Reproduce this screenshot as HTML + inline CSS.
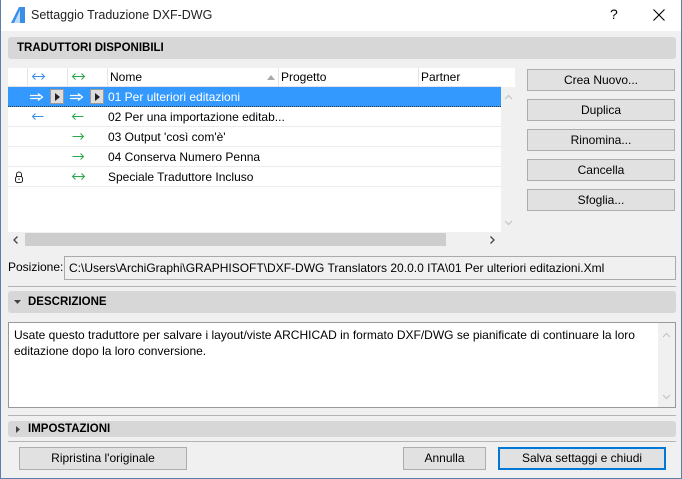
<!DOCTYPE html>
<html><head><meta charset="utf-8"><style>
*{box-sizing:border-box;margin:0;padding:0}
body{width:682px;height:479px;overflow:hidden;font-family:"Liberation Sans",sans-serif;font-size:12px;color:#000;background:#f0f0f0;position:relative}
.win{position:absolute;left:0;top:0;width:682px;height:479px;border:1px solid #5b7fa8;border-top:none;background:#f0f0f0}
.title{position:absolute;left:0;top:0;width:680px;height:31px;background:#fff}
.abs{position:absolute}
.sec{position:absolute;background:#d7d7d7;border-radius:3px;font-weight:bold;font-size:11.5px;line-height:22px}
.btn{position:absolute;background:#e1e1e1;border:1px solid #adadad;text-align:center;line-height:20px}
.row{position:absolute;left:7px;width:493px;height:20px;line-height:20px;border-bottom:1px solid #ececec;background:#fff}
.hr{position:absolute;height:1px;background:#b4b4b4}
svg.a{position:absolute;top:6px}
</style></head><body><div class="win">
<div class="title">
<svg class="abs" style="left:9px;top:6px" width="16" height="18"><path d="M1 17 L9 1 L15 1 L15 17 Z" fill="#3a8ee6"/><path d="M4 17 L10 4 L10 17Z" fill="#bcdcff"/></svg>
<div class="abs" style="left:30px;top:8px;font-size:12.5px;color:#222">Settaggio Traduzione DXF-DWG</div>
<div class="abs" style="left:609px;top:6px;font-size:14px">?</div>
<svg class="abs" style="left:652px;top:9px" width="12" height="12"><path d="M0.5 0.5L11.5 11.5M11.5 0.5L0.5 11.5" stroke="#000" stroke-width="1.1"/></svg>
</div>
<div class="sec" style="left:7px;top:37px;width:668px;height:22px;padding-left:9px">TRADUTTORI DISPONIBILI</div>
<div class="abs" style="left:7px;top:68px;width:507px;height:164px;background:#fff"></div>
<div class="abs" style="left:500px;top:87px;width:14px;height:145px;background:#f0f0f0"></div>
<svg class="abs" style="left:503px;top:94px" width="9" height="6"><path d="M1 5L4.5 1.5L8 5" stroke="#c0c0c0" fill="none"/></svg>
<svg class="abs" style="left:503px;top:220px" width="9" height="6"><path d="M1 1L4.5 4.5L8 1" stroke="#c0c0c0" fill="none"/></svg>
<div class="abs" style="left:7px;top:68px;width:493px;height:19px;border-bottom:1px solid #e5e5e5;line-height:19px">
<div class="abs" style="left:19px;top:0;width:1px;height:19px;background:#e5e5e5"></div>
<div class="abs" style="left:59px;top:0;width:1px;height:19px;background:#e5e5e5"></div>
<div class="abs" style="left:99px;top:0;width:1px;height:19px;background:#e5e5e5"></div>
<div class="abs" style="left:270px;top:0;width:1px;height:19px;background:#e5e5e5"></div>
<div class="abs" style="left:410px;top:0;width:1px;height:19px;background:#e5e5e5"></div>
<svg class="a" style="left:24px;top:5px" width="13" height="7"><path d="M0.5 3.5H12.5M3.5 0.5L0.5 3.5L3.5 6.5M9.5 0.5L12.5 3.5L9.5 6.5" stroke="#3a8ee6" fill="none"/></svg>
<svg class="a" style="left:64px;top:5px" width="13" height="7"><path d="M0.5 3.5H12.5M3.5 0.5L0.5 3.5L3.5 6.5M9.5 0.5L12.5 3.5L9.5 6.5" stroke="#2aa84a" fill="none"/></svg>
<span class="abs" style="left:102px">Nome</span>
<svg class="abs" style="left:259px;top:7px" width="8" height="5"><path d="M0 5L4 0L8 5Z" fill="#aaa"/></svg>
<span class="abs" style="left:273px">Progetto</span><span class="abs" style="left:413px">Partner</span></div>
<div class="row" style="top:87px;background:#3399ff;color:#fff;border-bottom:1px dotted #333">
<svg class="a" style="left:22px" width="14" height="8"><path d="M0 2.5H10M0 5.5H10M8 0.5L12.5 4L8 7.5" stroke="#fff" fill="none" stroke-width="1.2"/></svg>
<span class="abs" style="left:42px;top:2px;width:14px;height:15px;background:#ddd;border:1px solid #999"><svg class="abs" style="left:4px;top:3px" width="5" height="8"><path d="M0 0L5 4L0 8Z" fill="#222"/></svg></span>
<svg class="a" style="left:62px" width="14" height="8"><path d="M0 2.5H10M0 5.5H10M8 0.5L12.5 4L8 7.5" stroke="#fff" fill="none" stroke-width="1.2"/></svg>
<span class="abs" style="left:82px;top:2px;width:14px;height:15px;background:#ddd;border:1px solid #999"><svg class="abs" style="left:4px;top:3px" width="5" height="8"><path d="M0 0L5 4L0 8Z" fill="#222"/></svg></span>
<span class="abs" style="left:100px">01 Per ulteriori editazioni</span></div>
<div class="row" style="top:107px">
<svg class="a" style="left:24px" width="12" height="7"><path d="M0.5 3.5H11.5M3.5 0.5L0.5 3.5L3.5 6.5" stroke="#3a8ee6" fill="none"/></svg>
<svg class="a" style="left:64px" width="12" height="7"><path d="M0.5 3.5H11.5M3.5 0.5L0.5 3.5L3.5 6.5" stroke="#2aa84a" fill="none"/></svg>
<span class="abs" style="left:100px">02 Per una importazione editab...</span></div>
<div class="row" style="top:127px">
<svg class="a" style="left:64px" width="12" height="7"><path d="M0.5 3.5H11.5M8.5 0.5L11.5 3.5L8.5 6.5" stroke="#2aa84a" fill="none"/></svg>
<span class="abs" style="left:100px">03 Output 'così com'è'</span></div>
<div class="row" style="top:147px">
<svg class="a" style="left:64px" width="12" height="7"><path d="M0.5 3.5H11.5M8.5 0.5L11.5 3.5L8.5 6.5" stroke="#2aa84a" fill="none"/></svg>
<span class="abs" style="left:100px">04 Conserva Numero Penna</span></div>
<div class="row" style="top:167px">
<svg class="abs" style="left:6px;top:4px" width="10" height="12"><path d="M2.5 5.5V3.5A2.5 2.5 0 0 1 7.5 3.5V5.5" stroke="#222" fill="none"/><rect x="1.5" y="5.5" width="7" height="6" rx="2" stroke="#222" fill="#fff"/><path d="M5 7.5V9" stroke="#222"/></svg>
<svg class="a" style="left:64px" width="13" height="7"><path d="M0.5 3.5H12.5M3.5 0.5L0.5 3.5L3.5 6.5M9.5 0.5L12.5 3.5L9.5 6.5" stroke="#2aa84a" fill="none"/></svg>
<span class="abs" style="left:100px">Speciale Traduttore Incluso</span></div>
<div class="abs" style="left:7px;top:232px;width:507px;height:15px;background:#f0f0f0"></div>
<div class="abs" style="left:24px;top:233px;width:421px;height:13px;background:#cdcdcd"></div>
<svg class="abs" style="left:12px;top:236px" width="5" height="8"><path d="M4.5 0.5L1 4L4.5 7.5" stroke="#444" fill="none" stroke-width="1.3"/></svg>
<svg class="abs" style="left:489px;top:236px" width="5" height="8"><path d="M0.5 0.5L4 4L0.5 7.5" stroke="#444" fill="none" stroke-width="1.3"/></svg>
<div class="btn" style="left:526px;top:69px;width:148px;height:22px">Crea Nuovo...</div>
<div class="btn" style="left:526px;top:99px;width:148px;height:22px">Duplica</div>
<div class="btn" style="left:526px;top:129px;width:148px;height:22px">Rinomina...</div>
<div class="btn" style="left:526px;top:159px;width:148px;height:22px">Cancella</div>
<div class="btn" style="left:526px;top:189px;width:148px;height:22px">Sfoglia...</div>
<div class="abs" style="left:7px;top:260px">Posizione:</div>
<div class="abs" style="left:63px;top:256px;width:612px;height:24px;border:1px solid #aaa;background:#f0f0f0;line-height:22px;padding-left:4px">C:\Users\ArchiGraphi\GRAPHISOFT\DXF-DWG Translators 20.0.0 ITA\01 Per ulteriori editazioni.Xml</div>
<div class="hr" style="left:7px;top:286px;width:668px"></div>
<div class="sec" style="left:7px;top:291px;width:668px;height:22px;padding-left:20px">DESCRIZIONE</div>
<svg class="abs" style="left:13px;top:300px" width="7" height="4"><path d="M0 0H7L3.5 4Z" fill="#444"/></svg>
<div class="abs" style="left:7px;top:322px;width:668px;height:86px;border:1px solid #999;background:#fff;padding:4px 5px;line-height:16px">Usate questo traduttore per salvare i layout/viste ARCHICAD in formato DXF/DWG se pianificate di continuare la loro<br>editazione dopo la loro conversione.
<div class="abs" style="right:0;top:0;width:17px;height:84px;background:#f0f0f0"></div>
<svg class="abs" style="right:4px;top:9px" width="9" height="6"><path d="M1 5L4.5 1.5L8 5" stroke="#c0c0c0" fill="none"/></svg>
<svg class="abs" style="right:4px;top:71px" width="9" height="6"><path d="M1 1L4.5 4.5L8 1" stroke="#c0c0c0" fill="none"/></svg></div>
<div class="hr" style="left:7px;top:415px;width:668px"></div>
<div class="sec" style="left:7px;top:421px;width:668px;height:16px;line-height:16px;padding-left:20px">IMPOSTAZIONI</div>
<svg class="abs" style="left:15px;top:426px" width="4" height="7"><path d="M0 0L4 3.5L0 7Z" fill="#444"/></svg>
<div class="hr" style="left:7px;top:441px;width:668px"></div>
<div class="btn" style="left:18px;top:447px;width:168px;height:23px">Ripristina l'originale</div>
<div class="btn" style="left:402px;top:447px;width:83px;height:23px">Annulla</div>
<div class="btn" style="left:497px;top:447px;width:168px;height:23px;border:2px solid #0078d7;line-height:19px">Salva settaggi e chiudi</div>
</div></body></html>
